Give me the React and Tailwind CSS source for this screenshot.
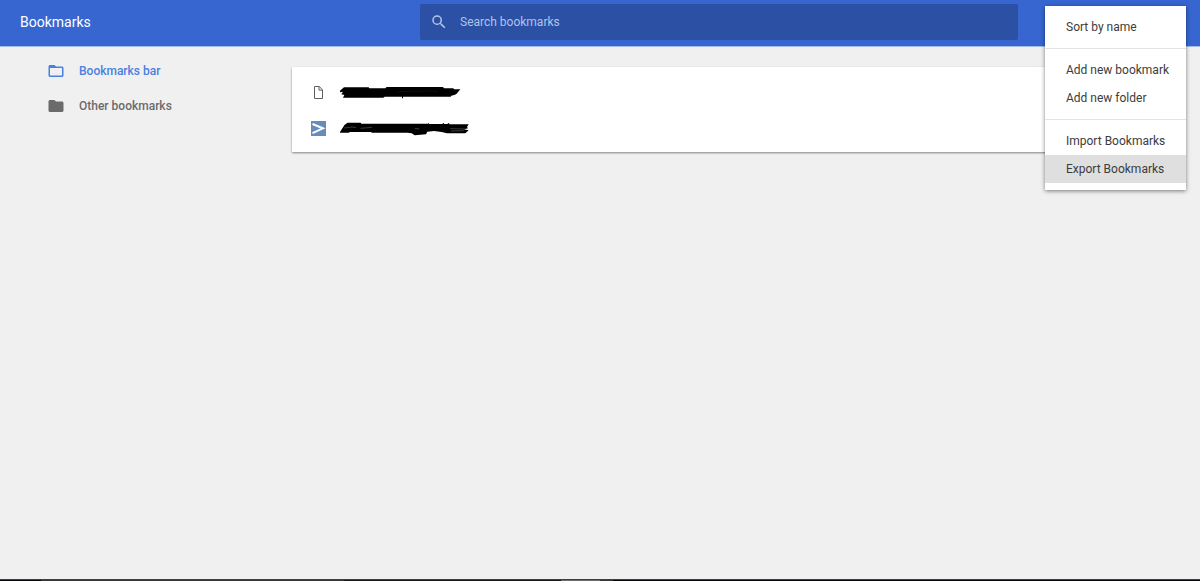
import React, { useState } from 'react';

const folders = [
  { id: 'bar', name: 'Bookmarks bar' },
  { id: 'other', name: 'Other bookmarks' },
];

const menuGroups = [
  ['Sort by name'],
  ['Add new bookmark', 'Add new folder'],
  ['Import Bookmarks', 'Export Bookmarks'],
];

const SearchIcon = () => (
  <svg viewBox="0 0 24 24" className="h-[18px] w-[18px] shrink-0 fill-[#b4c6ee]" aria-hidden="true">
    <path d="M15.5 14h-.79l-.28-.27A6.47 6.47 0 0 0 16 9.5 6.5 6.5 0 1 0 9.5 16c1.61 0 3.09-.59 4.23-1.57l.27.28v.79l5 4.99L20.49 19l-4.99-5zm-6 0A4.5 4.5 0 1 1 14 9.5 4.5 4.5 0 0 1 9.5 14z" />
  </svg>
);

const FolderIcon = ({ open }) => (
  <svg viewBox="0 0 24 24" className="h-[18px] w-[18px] shrink-0 fill-current" aria-hidden="true">
    {open ? (
      <path d="M20 6h-8l-2-2H4c-1.1 0-1.99.9-1.99 2L2 18c0 1.1.9 2 2 2h16c1.1 0 2-.9 2-2V8c0-1.1-.9-2-2-2zm0 12H4V8h16v10z" />
    ) : (
      <path d="M10 4H4c-1.1 0-1.99.9-1.99 2L2 18c0 1.1.9 2 2 2h16c1.1 0 2-.9 2-2V8c0-1.1-.9-2-2-2h-8l-2-2z" />
    )}
  </svg>
);

const PageIcon = () => (
  <svg viewBox="0 0 15 15" className="h-[15px] w-[15px] shrink-0" fill="none" stroke="#5f5f5f" aria-hidden="true">
    <path d="M3.5 1.5h4.8l3.2 3.4v8.6h-8z" fill="#fff" />
    <path d="M8 1.5v3.6h3.5" />
  </svg>
);

const ArrowIcon = () => (
  <svg viewBox="0 0 15 15" className="h-[15px] w-[15px] shrink-0" fill="none" aria-hidden="true">
    <path d="M0 0h15v15H0z" fill="#668bbd" />
    <path d="M1.5 3l10.5 4.4L1.5 12.2" stroke="#fff" strokeWidth="2" />
  </svg>
);

// Names are scribbled over
const FirstScribble = () => (
  <svg viewBox="0 0 420 60" className="h-5 w-[140px]" aria-hidden="true">
    <path d="M0 26L12 16H86L88 19H136L140 15H309L312 19H340L342 22H361L350 35L345 38L334 41L332 44H189V49H186V44H134L130 47H9L13 39L4 37L9 29L0 31Z" />
    <path d="M172 30l18-2 22 1 14-2 20 1 18-1 30 2" fill="none" stroke="#2e2e2e" />
  </svg>
);

const SecondScribble = () => (
  <svg viewBox="0 0 420 60" className="h-5 w-[140px]" aria-hidden="true">
    <path d="M0 42L14 20L23 14H62L64 17H264L266 15L268 18H306L311 15L313 18H322L326 15L329 19H386L381 27L384 31L372 34L386 37L376 46H321L305 42L282 39L262 41L258 49L224 52L215 46L203 44H96L92 42H30L26 44H0Z" />
    <path d="M12 30l24-3 12 2M62 31l34-3M224 31l14 2M330 32l44 1M333 39l38-1" fill="none" stroke="#777" strokeWidth="1.5" />
  </svg>
);

const bookmarks = [
  { id: 1, label: 'First bookmark', Icon: PageIcon, Name: FirstScribble },
  { id: 2, label: 'Second bookmark', Icon: ArrowIcon, Name: SecondScribble },
];

const Menu = () => (
  <div
    role="menu"
    className="absolute top-1.5 right-3.5 z-10 w-[141px] divide-y divide-[#e3e3e3] bg-white text-[#3c3c3c] shadow-[0_1px_4px_rgba(0,0,0,0.5)]"
  >
    {menuGroups.map((group) => (
      <div key={group[0]} className="py-[7px]">
        {group.map((item) => (
          <button
            key={item}
            role="menuitem"
            className={`block h-7 w-full pl-[21px] text-left ${
              item === 'Export Bookmarks' ? 'bg-[#dfdfdf]' : 'hover:bg-[#dfdfdf]'
            }`}
          >
            {item}
          </button>
        ))}
      </div>
    ))}
  </div>
);

const App = () => {
  const [selected, setSelected] = useState('bar');
  const [query, setQuery] = useState('');

  return (
    <div className="relative flex min-h-screen flex-col bg-[#f0f0f0] font-['Roboto',sans-serif] text-[12px] leading-4">
      {/* Toolbar */}
      <header className="flex h-[46px] items-start bg-[#3766d1] pt-1 shadow-[0_1px_0_rgba(55,102,209,0.4)]">
        <h1 className="w-[420px] shrink-0 pl-5 text-[14px] leading-9 text-white">Bookmarks</h1>
        <div className="mr-[182px] flex h-9 flex-1 items-center gap-3 rounded-xs bg-[#2b50a4] pl-2.5">
          <SearchIcon />
          <label htmlFor="search" className="sr-only">Search bookmarks</label>
          <input
            id="search"
            type="text"
            value={query}
            onChange={(e) => setQuery(e.target.value)}
            placeholder="Search bookmarks"
            className="min-w-0 flex-1 bg-transparent text-white outline-none placeholder:text-[#b0c3ec]"
          />
        </div>
      </header>

      <div className="flex flex-1">
        {/* Folder list */}
        <nav className="w-[292px] shrink-0 pt-[7px]">
          {folders.map((folder) => (
            <button
              key={folder.id}
              onClick={() => setSelected(folder.id)}
              className={`flex h-[35px] w-full items-center gap-3.5 pl-[47px] font-medium ${
                selected === folder.id ? 'text-[#4a80e0]' : 'text-[#6b6b6b]'
              }`}
            >
              <FolderIcon open={selected === folder.id} />
              {folder.name}
            </button>
          ))}
        </nav>

        {/* Bookmarks in the folder */}
        <main className="flex-1 pt-[21px] pr-8">
          <ul className="bg-white pt-[7px] pb-1.5 shadow-[0_1px_2px_rgba(0,0,0,0.45)]">
            {bookmarks.map(({ id, label, Icon, Name }) => (
              <li key={id}>
                <a href="#" aria-label={label} className="flex h-9 items-center gap-3.5 pl-[19px]">
                  <Icon />
                  <Name />
                </a>
              </li>
            ))}
          </ul>
        </main>
      </div>

      {/* Top edge of the taskbar */}
      <div className="flex h-0.5 border-t border-[#3d3d44] bg-[#08040f]">
        <div className="w-[41px]" />
        <div className="w-[303px] bg-[#3a3637]" />
        <div className="w-[217px] bg-[#1c181a]" />
        <div className="w-[39px] bg-[#6d6b6b]" />
        <div className="w-[13px] bg-[#383636]" />
      </div>

      <Menu />
    </div>
  );
};

export default App;
